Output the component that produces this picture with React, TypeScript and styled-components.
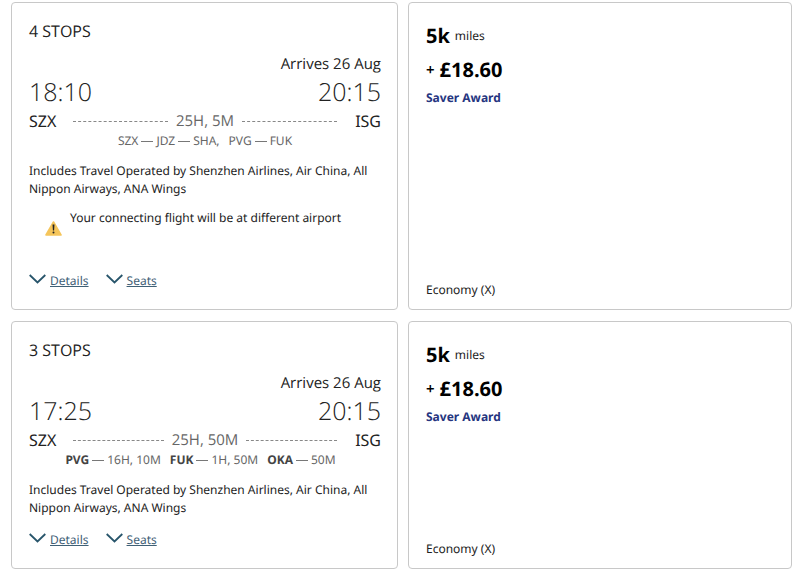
import React from "react";
import styled, { createGlobalStyle } from "styled-components";

const GlobalStyle = createGlobalStyle`
  *, *::before, *::after { box-sizing: border-box; }
  body {
    margin: 0;
    background: #fff;
    color: #222;
    font-family: "Noto Sans", "Open Sans", sans-serif;
    font-size: 12px;
    line-height: 18px;
    text-rendering: geometricPrecision;
  }
`;

const Results = styled.main`
  display: flex;
  flex-direction: column;
  gap: 11px;
  padding: 2px 8px 8px 11px;
`;

const Result = styled.article`
  display: grid;
  grid-template-columns: 387fr 384fr;
  gap: 10px;
`;

const Card = styled.section`
  display: flex;
  flex-direction: column;
  min-width: 0;
  padding: 17px 16px 18px 17px;
  border: 1px solid #c8c8c8;
  border-radius: 4px;
  background: #fff;
`;

const FareCard = styled(Card)`
  padding: 16px 16px 10px 17px;
`;

const Stops = styled.h2`
  margin: 0 0 12px;
  font-family: "Open Sans", sans-serif;
  font-size: 16px;
  font-weight: 400;
  line-height: 22px;
`;

const Arrival = styled.p`
  margin: 0;
  font-family: "Open Sans", sans-serif;
  font-size: 15px;
  line-height: 20px;
  text-align: right;
`;

const Times = styled.div`
  display: flex;
  justify-content: space-between;
  font-family: "Open Sans", sans-serif;
  font-size: 25px;
  font-weight: 300;
  line-height: 36px;
`;

const Route = styled.div`
  display: flex;
  align-items: center;
  font-size: 16px;
  line-height: 22px;
`;

const Airport = styled.span<{ $end?: boolean }>`
  width: 44px;
  text-align: ${(p) => (p.$end ? "right" : "left")};
`;

const Track = styled.div`
  display: flex;
  flex: 1;
  align-items: center;
  gap: 8px;
  color: #666;
  font-family: "Open Sans", sans-serif;
  font-size: 15px;
`;

const Dashes = styled.span`
  flex: 1;
  border-top: 1px dashed #888;
`;

const Legs = styled.p`
  display: flex;
  justify-content: center;
  gap: 9px;
  margin: 0 0 12px;
  color: #666;
`;

const Leg = styled.span`
  display: flex;
  align-items: center;
  gap: 3px;

  b { color: #444; }
  &:last-child:has(b) { padding-right: 9px; }
`;

const LegLine = styled.i`
  width: 12px;
  border-top: 1px solid #777;
`;

const Operators = styled.p`
  margin: 0;
`;

const Warning = styled.div`
  display: flex;
  gap: 8px;
  min-height: 49px;
  margin: 11px 0 0 16px;
`;

const WarningIcon = styled.svg`
  flex: none;
  width: 17px;
  height: 15px;
  margin-top: 12px;
`;

const Links = styled.nav`
  display: flex;
  gap: 17px;
  margin-top: auto;
  padding-top: 13px;
`;

const ToggleLink = styled.a`
  display: flex;
  gap: 4px;
  color: #3f6076;
  line-height: 20px;
  text-decoration: none;

  span { text-decoration: underline; }
`;

const Chevron = styled.svg`
  width: 17px;
  height: 10px;
  margin-top: 3px;
`;

const Price = styled.p`
  display: flex;
  align-items: center;
  gap: 5px;
  margin: 0;

  strong {
    color: #000;
    font-family: "Open Sans", sans-serif;
    font-size: 20px;
    line-height: 34px;
  }
`;

const Plus = styled.span`
  font-size: 15px;
  font-weight: 600;
  color: #000;
`;

const Award = styled.p`
  margin: 1px 0 0;
  color: #26357f;
  font-weight: 700;
  line-height: 20px;
`;

const Cabin = styled.p`
  margin: auto 0 0;
`;

type LegInfo = { parts: string[]; bold?: boolean };
type Flight = {
  id: string;
  stops: string;
  departs: string;
  duration: string;
  legs: LegInfo[];
  warning?: string;
};

const flights: Flight[] = [
  {
    id: "flight-1",
    stops: "4 STOPS",
    departs: "18:10",
    duration: "25H, 5M",
    legs: [{ parts: ["SZX", "JDZ", "SHA,"] }, { parts: ["PVG", "FUK"] }],
    warning: "Your connecting flight will be at different airport",
  },
  {
    id: "flight-2",
    stops: "3 STOPS",
    departs: "17:25",
    duration: "25H, 50M",
    legs: [
      { parts: ["PVG", "16H, 10M"], bold: true },
      { parts: ["FUK", "1H, 50M"], bold: true },
      { parts: ["OKA", "50M"], bold: true },
    ],
  },
];

function Toggle({ href, children }: { href: string; children: React.ReactNode }) {
  return (
    <ToggleLink href={href}>
      <Chevron viewBox="0 0 17 10" aria-hidden="true">
        <path d="M.7 1 8.5 8.4 16.3 1" fill="none" stroke="#28556b" strokeWidth="1.8" />
      </Chevron>
      <span>{children}</span>
    </ToggleLink>
  );
}

function FlightRow({ flight }: { flight: Flight }) {
  return (
    <Result>
      <Card>
        <Stops>{flight.stops}</Stops>
        <Arrival>Arrives 26 Aug</Arrival>
        <Times>
          <time>{flight.departs}</time>
          <time>20:15</time>
        </Times>
        <Route>
          <Airport>SZX</Airport>
          <Track>
            <Dashes />
            <span>{flight.duration}</span>
            <Dashes />
          </Track>
          <Airport $end>ISG</Airport>
        </Route>
        <Legs>
          {flight.legs.map((leg) => (
            <Leg key={leg.parts[0]}>
              {leg.parts.map((part, i) => (
                <React.Fragment key={part}>
                  {i > 0 && <LegLine />}
                  {leg.bold && i === 0 ? <b>{part}</b> : <span>{part}</span>}
                </React.Fragment>
              ))}
            </Leg>
          ))}
        </Legs>
        <Operators>
          Includes Travel Operated by Shenzhen Airlines, Air China, All Nippon Airways, ANA Wings
        </Operators>
        {flight.warning && (
          <Warning>
            <WarningIcon viewBox="0 0 17 15" aria-hidden="true">
              <path d="M8.5 1 16 14H1Z" fill="#f5c55b" stroke="#f5c55b" strokeWidth="1.6" strokeLinejoin="round" />
              <path d="M7.5 3.6h2L9.1 9.6H7.9Z" fill="#222" />
              <circle cx="8.5" cy="11.6" r="1" fill="#222" />
            </WarningIcon>
            <span>{flight.warning}</span>
          </Warning>
        )}
        <Links>
          <Toggle href={`#${flight.id}-details`}>Details</Toggle>
          <Toggle href={`#${flight.id}-seats`}>Seats</Toggle>
        </Links>
      </Card>
      <FareCard>
        <Price>
          <strong>5k</strong>
          <span>miles</span>
        </Price>
        <Price>
          <Plus>+</Plus>
          <strong>£18.60</strong>
        </Price>
        <Award>Saver Award</Award>
        <Cabin>Economy (X)</Cabin>
      </FareCard>
    </Result>
  );
}

export default function App() {
  return (
    <>
      <GlobalStyle />
      <Results>
        {flights.map((flight) => (
          <FlightRow key={flight.id} flight={flight} />
        ))}
      </Results>
    </>
  );
}
